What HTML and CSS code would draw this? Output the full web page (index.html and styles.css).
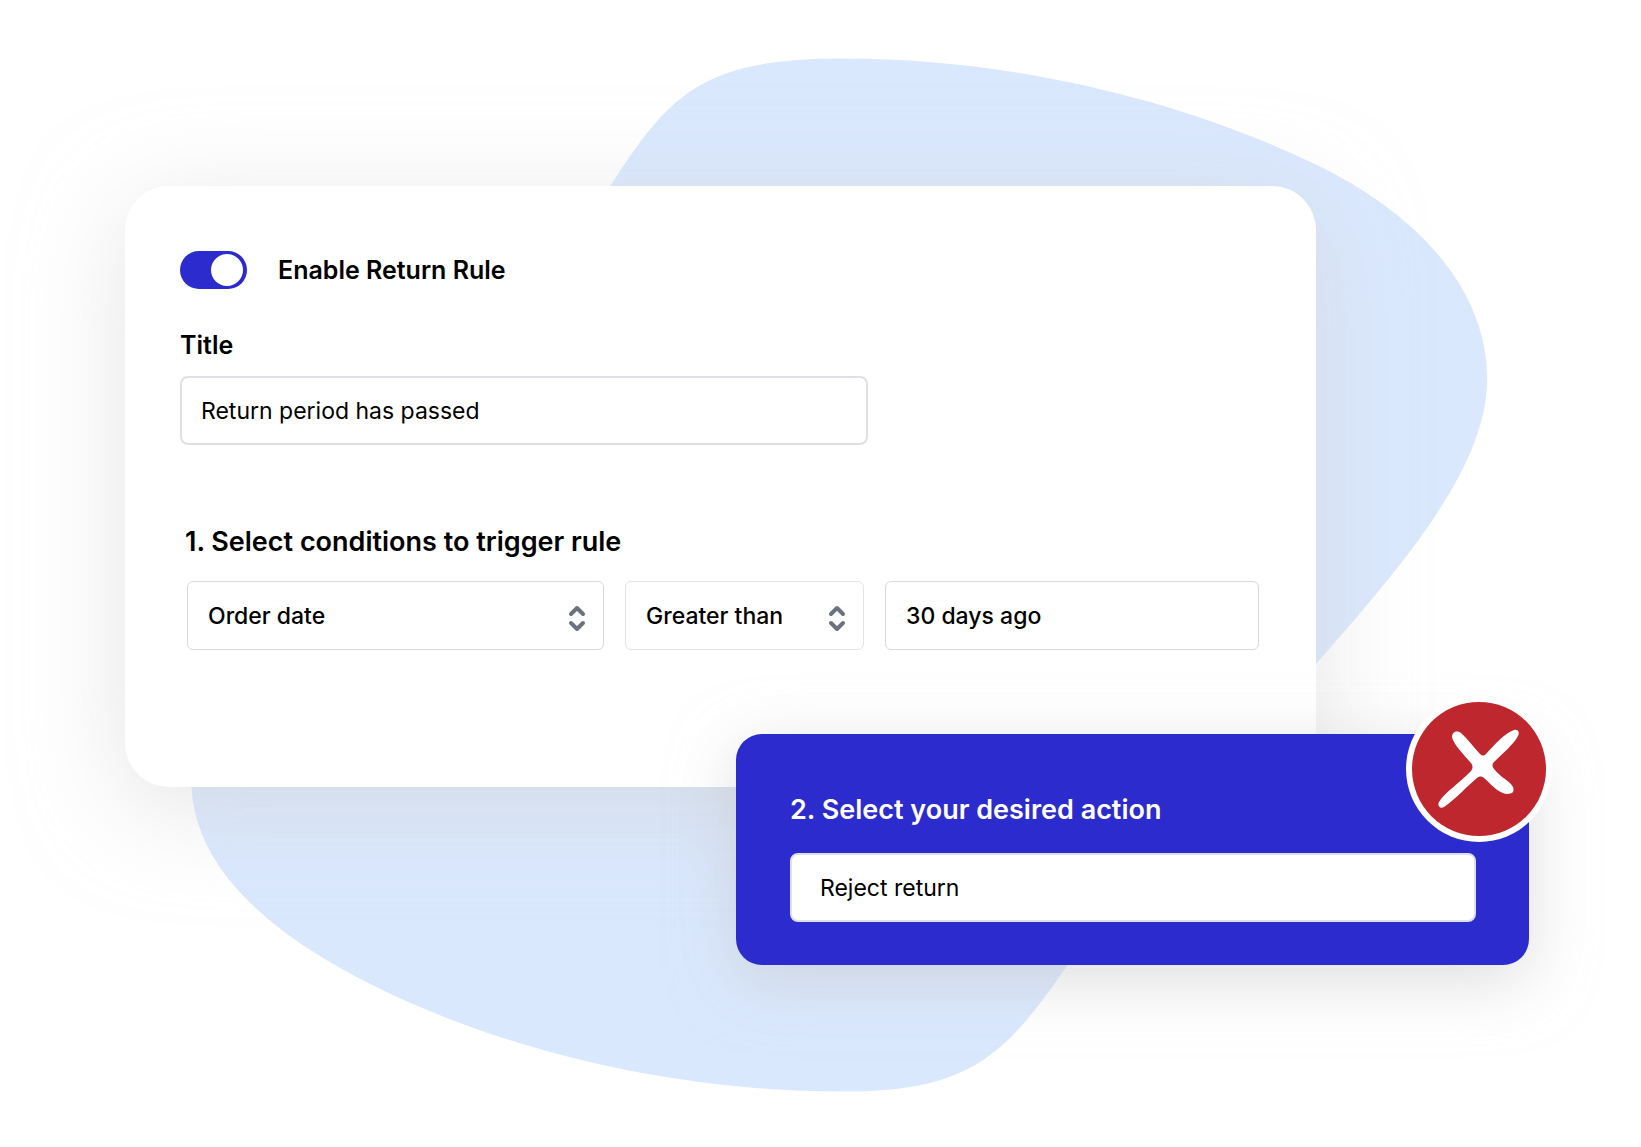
FILE: index.html
```html
<!DOCTYPE html>
<html lang="en">
<head>
<meta charset="utf-8">
<meta name="viewport" content="width=device-width, initial-scale=1">
<title>Return rule</title>
<link rel="stylesheet" href="styles.css">
</head>
<body>
<main class="scene">
  <svg class="blob" viewBox="0 0 1568 1096" aria-hidden="true">
    <path d="M583 178C640 90 670 56 805 56C970 56 1130 96 1257 157C1360 207 1421 280 1421 362C1421 445 1345 535 1257 635C1150 757 1080 835 1020 922C960 1010 925 1043 805 1043C600 1043 410 980 300 910C225 862 186 810 183 752C180 640 400 450 583 178Z"/>
  </svg>

  <form class="stack">
    <section class="card rule">
      <label class="toggle">
        <input type="checkbox" class="switch" checked>
        <span>Enable Return Rule</span>
      </label>

      <label class="label" for="title">Title</label>
      <input class="field title-field" id="title" type="text" value="Return period has passed">

      <h2 class="heading">1. Select conditions to trigger rule</h2>
      <div class="conditions">
        <div class="picker">
          <select class="field" aria-label="Condition"><option>Order date</option></select>
          <svg class="chevrons" viewBox="0 0 18 28" aria-hidden="true"><path d="M3 10l6-6 6 6M3 19l6 6 6-6"/></svg>
        </div>
        <div class="picker">
          <select class="field light" aria-label="Comparison"><option>Greater than</option></select>
          <svg class="chevrons" viewBox="0 0 18 28" aria-hidden="true"><path d="M3 10l6-6 6 6M3 19l6 6 6-6"/></svg>
        </div>
        <input class="field" type="text" aria-label="Value" value="30 days ago">
      </div>
    </section>

    <section class="card action">
      <label class="heading" for="action">2. Select your desired action</label>
      <input class="field action-field" id="action" type="text" value="Reject return">
      <svg class="badge" viewBox="0 0 146 146" aria-hidden="true">
        <circle class="badge-ring" cx="73" cy="73" r="73"/>
        <circle class="badge-disc" cx="73" cy="73" r="67"/>
        <path class="badge-cross" d="M46 41C46 36 51 34 55 37C62 43 68 52 74 58C76 60 78 60 80 58C88 49 99 37 108 34C112 33 114 36 112 40C108 48 97 57 88 66C86 68 86 70 88 73C94 81 104 85 107 91C109 97 105 98 100 98C91 96 85 88 78 82C76 80 73 80 71 82C61 90 51 102 38 111C34 113 31 110 33 106C38 97 56 85 65 75C67 72 67 70 65 67C59 60 47 48 46 41Z"/>
      </svg>
    </section>
  </form>
</main>
</body>
</html>
```
FILE: styles.css
```css
* {
  box-sizing: border-box;
}

body {
  margin: 0;
  background: #fff;
  color: #000;
  font-family: Inter, "Liberation Sans", sans-serif;
}

.scene {
  position: relative;
  min-height: 100vh;
  padding: 186px 112px 112px 125px;
  overflow: hidden;
}

.blob {
  position: absolute;
  top: 0;
  left: 0;
  width: 100%;
  fill: #dae8fe;
}

.stack {
  position: relative;
}

.card {
  display: flex;
  flex-direction: column;
}

.rule {
  margin-right: 213px;
  padding: 65px 57px 137px 55px;
  border-radius: 44px;
  background: #fff;
  box-shadow: 0 20px 100px rgba(208, 208, 208, 0.56);
}

.toggle {
  display: flex;
  align-items: center;
  gap: 31px;
  height: 38px;
  font-size: 25px;
  font-weight: 600;
}

.switch {
  display: flex;
  align-items: center;
  justify-content: flex-end;
  width: 67px;
  height: 38px;
  margin: 0;
  padding: 3px 4px;
  border-radius: 19px;
  background: #2c2bce;
  appearance: none;
}

.switch::before {
  width: 32px;
  height: 32px;
  border-radius: 50%;
  background: #fff;
  content: "";
}

.switch:not(:checked) {
  justify-content: flex-start;
  background: #9a9aa5;
}

.label {
  margin-top: 40px;
  font-size: 25px;
  font-weight: 600;
  line-height: 32px;
}

.field {
  width: 100%;
  height: 69px;
  margin: 0;
  padding: 0 20px;
  border: 1px solid #d8d9dd;
  border-radius: 6px;
  background: #fff;
  color: #000;
  font-family: inherit;
  font-size: 23px;
  font-weight: 500;
  appearance: none;
}

.light {
  border-color: #e3e4e8;
}

.title-field,
.action-field {
  border: 2px solid #dfe0e5;
  border-radius: 8px;
  font-weight: 400;
}

.title-field {
  max-width: 688px;
  margin-top: 15px;
  padding: 0 19px;
}

.heading {
  margin: 0;
  font-size: 27px;
  font-weight: 600;
  line-height: 36px;
}

.rule .heading {
  margin: 79px 0 21px 5px;
}

.conditions {
  display: grid;
  grid-template-columns: 417fr 239fr 374fr;
  gap: 21px;
  padding-left: 7px;
}

.picker {
  position: relative;
}

.chevrons {
  position: absolute;
  top: 23px;
  right: 18px;
  width: 18px;
  height: 28px;
  fill: none;
  stroke: #6b7280;
  stroke-linecap: round;
  stroke-linejoin: round;
  stroke-width: 4;
  pointer-events: none;
}

.action {
  position: relative;
  gap: 25px;
  margin: -53px 0 0 611px;
  padding: 58px 53px 43px 54px;
  border-radius: 26px;
  background: #2c2bce;
  box-shadow: 0 16px 64px rgba(196, 196, 196, 0.56);
  color: #fff;
}

.action-field {
  padding: 0 28px;
}

.badge {
  position: absolute;
  top: -38px;
  right: -23px;
  width: 146px;
  height: 146px;
}

.badge-ring,
.badge-cross {
  fill: #fff;
}

.badge-disc {
  fill: #bd272d;
}
```
